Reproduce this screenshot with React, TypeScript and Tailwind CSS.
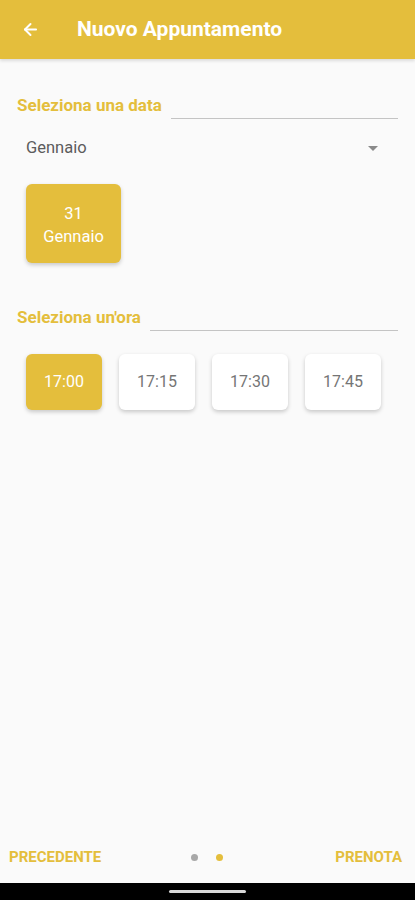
import { ArrowLeft } from "lucide-react";

const times = ["17:00", "17:15", "17:30", "17:45"];

function SectionTitle({ label }: { label: string }) {
  return (
    <div className="flex items-end gap-[9px]">
      <span className="text-[17px] font-bold leading-[22px] text-[#e4be3c]">{label}</span>
      <div className="mb-[-3px] h-px flex-1 bg-[#c4c4c4]" />
    </div>
  );
}

export default function App() {
  return (
    <div
      className="flex h-[900px] w-[415px] flex-col bg-[#fafafa]"
      style={{ fontFamily: "Roboto, 'Liberation Sans', sans-serif" }}
    >
      <header className="flex h-[59px] items-center bg-[#e4be3c] pl-[21px] shadow-[0_2px_3px_rgba(0,0,0,0.12)]">
        <ArrowLeft className="h-[19px] w-[19px] text-white" strokeWidth={2.5} />
        <h1 className="ml-[37px] text-[21px] font-bold text-white">Nuovo Appuntamento</h1>
      </header>

      <main className="flex-1 pl-[17px] pr-[17px] pt-[35px]">
        <SectionTitle label="Seleziona una data" />

        <div className="mt-[20px] flex items-center justify-between pl-[9px] pr-[20px]">
          <span className="text-[16.5px] text-[#5c5c5c]">Gennaio</span>
          <span className="h-0 w-0 border-x-[5px] border-t-[5px] border-x-transparent border-t-[#8a8a8a]" />
        </div>

        <div className="ml-[9px] mt-[23px] flex h-[79px] w-[95px] flex-col items-center justify-center rounded-[6px] bg-[#e4be3c] pt-[3px] text-[16.5px] leading-[23px] text-white shadow-[0_2px_4px_rgba(0,0,0,0.2)]">
          <span>31</span>
          <span>Gennaio</span>
        </div>

        <div className="mt-[43px]">
          <SectionTitle label="Seleziona un'ora" />
        </div>

        <div className="ml-[9px] mt-[26px] flex gap-[17px]">
          {times.map((t, i) => (
            <div
              key={t}
              className={
                i === 0
                  ? "flex h-[56px] w-[76px] items-center justify-center rounded-[6px] bg-[#e4be3c] text-[16px] text-white shadow-[0_2px_4px_rgba(0,0,0,0.2)]"
                  : "flex h-[56px] w-[76px] items-center justify-center rounded-[6px] bg-white text-[16px] text-[#757575] shadow-[0_2px_4px_rgba(0,0,0,0.2)]"
              }
            >
              {t}
            </div>
          ))}
        </div>
      </main>

      <footer className="relative flex h-[50px] items-center justify-between px-[9px] pb-[1px]">
        <span className="text-[15px] font-bold text-[#e4be3c]">PRECEDENTE</span>
        <div className="absolute left-[191px] top-[21px] flex gap-[18px]">
          <span className="h-[7px] w-[7px] rounded-full bg-[#a8a8a8]" />
          <span className="h-[7px] w-[7px] rounded-full bg-[#e4be3c]" />
        </div>
        <span className="pr-[4px] text-[15px] font-bold text-[#e4be3c]">PRENOTA</span>
      </footer>

      <div className="flex h-[17px] items-center justify-center bg-black">
        <span className="h-[3px] w-[77px] rounded-full bg-[#d9d9d9]" />
      </div>
    </div>
  );
}
